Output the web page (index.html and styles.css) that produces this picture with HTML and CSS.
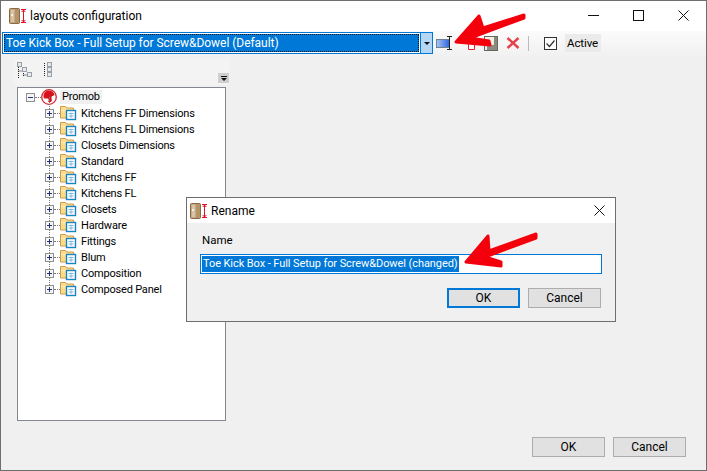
FILE: index.html
```html
<!DOCTYPE html>
<html lang="en">
<head>
<meta charset="utf-8">
<title>layouts configuration</title>
<link rel="stylesheet" href="styles.css">
</head>
<body>
<svg class="defs" width="0" height="0" aria-hidden="true">
  <defs>
    <symbol id="door" viewBox="0 0 18 16">
      <rect x="0.5" y="0.5" width="10" height="15" rx="1" fill="#b59468" stroke="#8a6a42"/>
      <rect x="1.5" y="1.5" width="4" height="13" fill="#d8c4a4"/>
      <rect x="2" y="6" width="2" height="2" fill="#f4f0e8"/>
      <path d="M12 1.5h5M14.5 1.5v13M12 14.5h5M12.7 4l1.8-2 1.8 2M12.7 12l1.8 2 1.8-2" fill="none" stroke="#e3122c" stroke-width="1"/>
    </symbol>
    <symbol id="folder" viewBox="0 0 17 16">
      <path d="M.5 13V1.500h5l1.500 1.500h6.500V13z" fill="#fbdc8c" stroke="#d19a48"/>
      <path d="M1.500 5.500h11" stroke="#fff3c8"/>
      <rect x="6.500" y="5.500" width="9" height="9" fill="#fff" stroke="#1b83c4" stroke-width="1.400"/>
      <path d="M8.500 8.500h5M8.500 11h5M11 7.500v5.500" stroke="#7fbbe0" fill="none"/>
    </symbol>
    <symbol id="plus" viewBox="0 0 9 9">
      <rect x="0.500" y="0.500" width="8" height="8" fill="#f4f4f6" stroke="#8e8f8f"/>
      <path d="M2 4.500h5M4.500 2v5" stroke="#26337c"/>
    </symbol>
  </defs>
</svg>

<main class="window">
  <header class="titlebar">
    <svg class="title-icon"><use href="#door"/></svg>
    <span class="title-text">layouts configuration</span>
    <div class="controls">
      <svg class="ctl" viewBox="0 0 11 11"><path d="M0 5.500h11" stroke="#111"/></svg>
      <svg class="ctl" viewBox="0 0 11 11"><rect x="0.500" y="0.500" width="10" height="10" fill="none" stroke="#111"/></svg>
      <svg class="ctl" viewBox="0 0 11 11"><path d="M.5.500l10 10M10.500.500l-10 10" stroke="#111"/></svg>
    </div>
  </header>

  <section class="toolbar">
    <div class="combo">
      <div class="combo-value"><span class="combo-text">Toe Kick Box - Full Setup for Screw&amp;Dowel (Default)</span></div>
      <div class="combo-btn"><i class="caret"></i></div>
    </div>
    <div class="tools">
      <svg class="tool-rename" viewBox="0 0 18 16">
        <defs><linearGradient id="rn" x1="0" x2="1"><stop offset="0" stop-color="#a8c8f0"/><stop offset="1" stop-color="#2e62e0"/></linearGradient></defs>
        <rect x="0.500" y="4.500" width="13" height="8" fill="url(#rn)" stroke="#6f7f95"/>
        <path d="M11 1.500h5M13.500 1.500v13M11 14.500h5" stroke="#222" fill="none"/>
      </svg>
      <svg class="tool-del" viewBox="0 0 7 14"><path d="M.5 7.500v6h6v-6" fill="#fff" stroke="#e2202c"/></svg>
      <svg class="tool-save" viewBox="0 0 14 15">
        <rect x="0.500" y="0.500" width="13" height="14" fill="#efefe8" stroke="#66665f"/>
        <rect x="10" y="1" width="3" height="13" fill="#8a8a78"/>
        <rect x="3" y="9" width="7" height="5" fill="#8c8c86"/>
      </svg>
      <svg class="tool-x" viewBox="0 0 14 12"><path d="M1.500 1l11 10M12.500 1l-11 10" stroke="#e4434b" stroke-width="2.400"/></svg>
      <i class="sep"></i>
      <svg class="check" viewBox="0 0 13 13">
        <rect x="0.500" y="0.500" width="12" height="12" fill="#fff" stroke="#333"/>
        <path d="M2.500 6.500l3 3 5-6" fill="none" stroke="#333" stroke-width="1.200"/>
      </svg>
      <span class="active-label">Active</span>
    </div>
  </section>

  <section class="tree-tools">
    <svg class="tt-a" viewBox="0 0 16 16">
      <path d="M1.500 5v11M1.500 9h4M6.500 9v5M6.500 13h3" stroke="#222" stroke-dasharray="1 1" fill="none"/>
      <rect x="0.500" y="0.500" width="4" height="4" fill="#e6e9ec" stroke="#98a0a8"/>
      <rect x="5.500" y="5.500" width="4" height="4" fill="#e6e9ec" stroke="#98a0a8"/>
      <rect x="10.500" y="10.500" width="4" height="4" fill="#e6e9ec" stroke="#98a0a8"/>
    </svg>
    <svg class="tt-b" viewBox="0 0 9 16">
      <path d="M.5 1v14" stroke="#222" stroke-dasharray="1 1"/>
      <rect x="3.500" y="0.500" width="4" height="4" fill="#e6e9ec" stroke="#98a0a8"/>
      <rect x="3.500" y="5.500" width="4" height="4" fill="#e6e9ec" stroke="#98a0a8"/>
      <rect x="3.500" y="10.500" width="4" height="4" fill="#e6e9ec" stroke="#98a0a8"/>
    </svg>
    <div class="overflow"><i class="of-bar"></i><i class="caret"></i></div>
  </section>

  <section class="tree">
    <div class="root-row">
      <svg class="exp" viewBox="0 0 9 9"><rect x="0.500" y="0.500" width="8" height="8" fill="#f4f4f6" stroke="#8e8f8f"/><path d="M2 4.500h5" stroke="#26337c"/></svg>
      <i class="dots"></i>
      <svg class="promob" viewBox="0 0 16 16">
        <circle cx="8" cy="8" r="7.300" fill="#fff" stroke="#d8222a" stroke-width="1.300"/>
        <path d="M2.500 8a5.500 5.500 0 0 1 11-2c-1 1-3 .5-3 2.500 0 1.500 1 3-.5 4.500H7c1.500-2 .5-3.500-1-3.500-1.500 0-3.500.5-3.500-1.500z" fill="#d8121c"/>
      </svg>
      <span class="root-label">Promob</span>
    </div>
    <ul class="nodes">
      <li class="node"><svg class="exp"><use href="#plus"/></svg><i class="dots"></i><svg class="fld"><use href="#folder"/></svg><span class="lbl">Kitchens FF Dimensions</span></li>
      <li class="node"><svg class="exp"><use href="#plus"/></svg><i class="dots"></i><svg class="fld"><use href="#folder"/></svg><span class="lbl">Kitchens FL Dimensions</span></li>
      <li class="node"><svg class="exp"><use href="#plus"/></svg><i class="dots"></i><svg class="fld"><use href="#folder"/></svg><span class="lbl">Closets Dimensions</span></li>
      <li class="node"><svg class="exp"><use href="#plus"/></svg><i class="dots"></i><svg class="fld"><use href="#folder"/></svg><span class="lbl">Standard</span></li>
      <li class="node"><svg class="exp"><use href="#plus"/></svg><i class="dots"></i><svg class="fld"><use href="#folder"/></svg><span class="lbl">Kitchens FF</span></li>
      <li class="node"><svg class="exp"><use href="#plus"/></svg><i class="dots"></i><svg class="fld"><use href="#folder"/></svg><span class="lbl">Kitchens FL</span></li>
      <li class="node"><svg class="exp"><use href="#plus"/></svg><i class="dots"></i><svg class="fld"><use href="#folder"/></svg><span class="lbl">Closets</span></li>
      <li class="node"><svg class="exp"><use href="#plus"/></svg><i class="dots"></i><svg class="fld"><use href="#folder"/></svg><span class="lbl">Hardware</span></li>
      <li class="node"><svg class="exp"><use href="#plus"/></svg><i class="dots"></i><svg class="fld"><use href="#folder"/></svg><span class="lbl">Fittings</span></li>
      <li class="node"><svg class="exp"><use href="#plus"/></svg><i class="dots"></i><svg class="fld"><use href="#folder"/></svg><span class="lbl">Blum</span></li>
      <li class="node"><svg class="exp"><use href="#plus"/></svg><i class="dots"></i><svg class="fld"><use href="#folder"/></svg><span class="lbl">Composition</span></li>
      <li class="node"><svg class="exp"><use href="#plus"/></svg><i class="dots"></i><svg class="fld"><use href="#folder"/></svg><span class="lbl">Composed Panel</span></li>
    </ul>
  </section>

  <footer class="footer">
    <button class="btn">OK</button>
    <button class="btn">Cancel</button>
  </footer>
</main>

<aside class="dialog">
  <header class="dlg-title">
    <svg class="dlg-icon"><use href="#door"/></svg>
    <span class="dlg-text">Rename</span>
    <svg class="dlg-close" viewBox="0 0 11 11"><path d="M.5.500l10 10M10.500.500l-10 10" stroke="#111"/></svg>
  </header>
  <div class="dlg-body">
    <label class="dlg-label">Name</label>
    <div class="dlg-input"><span class="dlg-sel">Toe Kick Box - Full Setup for Screw&amp;Dowel (changed)</span></div>
    <div class="dlg-actions">
      <button class="btn btn-default">OK</button>
      <button class="btn">Cancel</button>
    </div>
  </div>
</aside>

<svg class="arrows" viewBox="0 0 707 471" aria-hidden="true">
  <path class="arrow-fill" d="M524 15L483 28L479 16L456 42L490 45L489 41L470 38L524 18z"/>
  <path class="arrow-fill" d="M536 234L489 251L488 236L466 262L501 266L501 262L485 257L536 238z"/>
</svg>
</body>
</html>
```
FILE: styles.css
```css
* { box-sizing: border-box; }
html, body { margin: 0; padding: 0; }
body {
  width: 707px;
  height: 471px;
  overflow: hidden;
  position: relative;
  font-family: Roboto, "Liberation Sans", sans-serif;
  font-size: 12px;
  color: #000;
  background: #f0f0f0;
}
.defs { position: absolute; }

.window {
  width: 707px;
  height: 471px;
  display: flex;
  flex-direction: column;
  border: 1px solid #6e6e6e;
  background: #f0f0f0;
}

.titlebar {
  height: 30px;
  flex: none;
  display: flex;
  align-items: center;
  background: #fff;
  padding-left: 8px;
}
.title-icon { width: 18px; height: 16px; margin-right: 3px; }
.title-text { font-size: 12px; }
.controls { margin-left: auto; display: flex; gap: 34px; padding-right: 17px; padding-bottom: 2px; }
.ctl { width: 11px; height: 11px; display: block; }

.toolbar {
  height: 27px;
  flex: none;
  display: flex;
  align-items: flex-start;
  padding: 1px 0 0 1px;
  background: linear-gradient(#fbfbfb, #f0f0f0);
}
.combo {
  width: 431px;
  height: 22px;
  flex: none;
  display: flex;
  border: 1px solid #0078d7;
  background: #fff;
}
.combo-value {
  flex: 1;
  padding: 1px;
  display: flex;
}
.combo-text {
  flex: 1;
  background: #0078d7;
  color: #fff;
  outline: 1px dotted #111;
  outline-offset: -1px;
  padding-left: 2px;
  line-height: 18px;
  font-size: 12px;
  letter-spacing: -0.04px;
  white-space: nowrap;
  overflow: hidden;
}
.combo-btn {
  width: 12px;
  display: flex;
  align-items: center;
  justify-content: center;
  background: #b5d7f3;
  border-left: 1px solid #0078d7;
}
.caret {
  display: block;
  width: 0;
  height: 0;
  border-left: 3px solid transparent;
  border-right: 3px solid transparent;
  border-top: 3px solid #111;
}
.tools { display: flex; align-items: center; height: 22px; }
.tool-rename { width: 18px; height: 16px; margin-left: 3px; }
.tool-del { width: 7px; height: 14px; margin-left: 14px; }
.tool-save { width: 14px; height: 15px; margin-left: 9px; }
.tool-x { width: 14px; height: 12px; margin-left: 8px; }
.sep { width: 1px; height: 15px; background: #bbb; margin-left: 8px; }
.check { width: 13px; height: 13px; margin-left: 15px; }
.active-label { margin-left: 8px; padding: 2px 2px; font-size: 11.5px; letter-spacing: -0.1px; width: 36px; white-space: nowrap; background: #ebebeb; }

.tree-tools {
  width: 216px;
  height: 26px;
  flex: none;
  margin: 1px 0 0 13px;
  position: relative;
  display: flex;
  align-items: flex-start;
  padding: 3px 0 0 3px;
  background: #f3f3f3;
  border-radius: 3px;
}
.tt-a { width: 16px; height: 16px; }
.tt-b { width: 9px; height: 16px; margin-left: 11px; }
.overflow {
  margin-left: auto;
  margin-top: 11px;
  margin-right: 1px;
  width: 11px;
  height: 10px;
  background: #cfcfcf;
  display: flex;
  flex-direction: column;
  align-items: center;
  justify-content: center;
  gap: 1px;
}
.of-bar { width: 6px; height: 1px; background: #111; }

.tree {
  width: 209px;
  height: 334px;
  flex: none;
  margin: 2px 0 0 16px;
  border: 1px solid #828790;
  background: #fff;
  padding: 1px 0 0 8px;
  font-size: 11px;
  letter-spacing: -0.2px;
}
.root-row { height: 16px; display: flex; align-items: center; }
.exp { width: 9px; height: 9px; flex: none; display: block; }
.dots { display: block; width: 6px; border-top: 1px dotted #777; flex: none; }
.promob { width: 16px; height: 16px; flex: none; }
.root-label {
  margin-left: 3px;
  padding: 0 2px;
  line-height: 14px;
  background: #f0f0f0;
}
.nodes {
  list-style: none;
  margin: 0;
  padding: 0 0 0 19px;
  position: relative;
}
.nodes::before {
  content: "";
  position: absolute;
  left: 23px;
  top: -8px;
  bottom: 8px;
  border-left: 1px dotted #777;
}
.node { height: 16px; display: flex; align-items: center; position: relative; }
.fld { width: 17px; height: 16px; flex: none; }
.lbl { margin-left: 4px; white-space: nowrap; }

.footer {
  flex: 1;
  display: flex;
  justify-content: flex-end;
  align-items: flex-start;
  gap: 8px;
  padding: 16px 20px 0 0;
}
.btn {
  width: 73px;
  height: 20px;
  padding: 0;
  font: inherit;
  color: #000;
  background: #e1e1e1;
  border: 1px solid #adadad;
  display: block;
}
.btn-default { border: 2px solid #0078d7; }

.dialog {
  position: absolute;
  left: 186px;
  top: 197px;
  width: 430px;
  height: 125px;
  border: 1px solid #6e6e6e;
  background: #f0f0f0;
  display: flex;
  flex-direction: column;
}
.dlg-title {
  height: 25px;
  flex: none;
  display: flex;
  align-items: center;
  background: #fff;
  padding: 0 10px 0 3px;
}
.dlg-icon { width: 18px; height: 16px; }
.dlg-text { margin-left: 3px; font-size: 12px; }
.dlg-close { width: 11px; height: 11px; margin-left: auto; }
.dlg-body { flex: 1; padding: 9px 14px 0 13px; }
.dlg-label { display: block; line-height: 16px; margin-left: 2px; font-size: 11.5px; }
.dlg-input {
  width: 402px;
  height: 20px;
  margin-top: 6px;
  border: 1px solid #0078d7;
  background: #fff;
  padding: 1px 0 0 1px;
  line-height: 16px;
  font-size: 11px;
  letter-spacing: -0.08px;
  white-space: nowrap;
}
.dlg-sel { background: #0078d7; color: #fff; padding: 0 1px; display: inline-block; }
.dlg-actions {
  display: flex;
  justify-content: flex-end;
  gap: 8px;
  margin-top: 14px;
}

.arrows {
  position: absolute;
  left: 0;
  top: 0;
  width: 707px;
  height: 471px;
  pointer-events: none;
}
.arrow-fill {
  fill: #f4000c;
  stroke: #f4000c;
  stroke-width: 3;
  stroke-linejoin: round;
}
```
